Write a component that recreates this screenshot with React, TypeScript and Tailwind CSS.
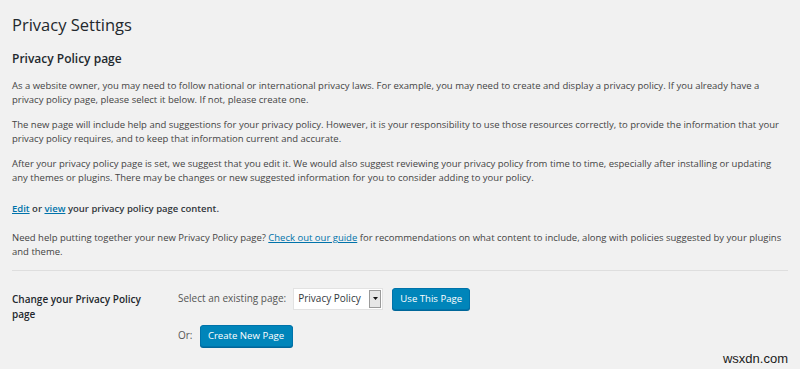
import React from "react";

export default function App() {
  return (
    <div
      className="relative w-[800px] h-[369px] overflow-hidden bg-[#f1f1f1] px-[12px] text-[#444]"
      style={{ fontFamily: '"Open Sans", "Noto Sans", sans-serif' }}
    >
      <h1 className="pt-[14px] text-[16.5px] leading-[22px] font-normal text-[#23282d]">
        Privacy Settings
      </h1>
      <h2 className="mt-[15px] text-[12px] leading-[16px] font-semibold text-[#23282d]">
        Privacy Policy page
      </h2>
      <div className="mt-[11.75px] text-[9.5px] leading-[14.5px]">
        <p>
          As a website owner, you may need to follow national or international privacy laws. For example, you may need to create and display a privacy policy. If you already have a privacy policy page, please select it below. If not, please create one.
        </p>
        <p className="mt-[10px]">
          The new page will include help and suggestions for your privacy policy. However, it is your responsibility to use those resources correctly, to provide the information that your privacy policy requires, and to keep that information current and accurate.
        </p>
        <p className="mt-[10px]">
          After your privacy policy page is set, we suggest that you edit it. We would also suggest reviewing your privacy policy from time to time, especially after installing or updating any themes or plugins. There may be changes or new suggested information for you to consider adding to your policy.
        </p>
        <p className="mt-[16px] font-semibold text-[#32373c]">
          <a className="text-[#0073aa] underline">Edit</a> or{" "}
          <a className="text-[#0073aa] underline">view</a> your privacy policy page content.
        </p>
        <p className="mt-[14.5px]">
          Need help putting together your new Privacy Policy page?{" "}
          <a className="text-[#0073aa] underline">Check out our guide</a> for recommendations on what content to include, along with policies suggested by your plugins and theme.
        </p>
      </div>
      <div className="mt-[10px] h-px bg-[#dedede]" />
      <div className="mt-[17px] grid grid-cols-[166px_1fr]">
        <div className="pt-[4.5px] pr-[20px] text-[10px] leading-[14.5px] font-semibold text-[#23282d]">
          Change your Privacy Policy page
        </div>
        <div className="flex flex-col gap-[15px] text-[10px]">
          <div className="flex items-center h-[22px]">
            <span className="text-[#555]">Select an existing page:</span>
            <div className="ml-[7px] flex items-stretch h-[22px] w-[90px] bg-white border border-[#e2e2e2]">
              <span className="flex-1 flex items-center pl-[4px] text-[#32373c]">Privacy Policy</span>
              <span className="my-[1px] mr-[1px] w-[12px] flex items-center justify-center bg-[#e6e6e6] border border-[#9a9a9a]">
                <svg width="5" height="3" viewBox="0 0 5 3">
                  <path d="M0 0 H5 L2.5 3 Z" fill="#111" />
                </svg>
              </span>
            </div>
            <button className="ml-[9px] h-[22px] w-[78px] rounded-[3px] bg-[#0085ba] border border-[#0073aa] text-white text-[9.6px] shadow-[0_1px_0_#006799]">
              Use This Page
            </button>
          </div>
          <div className="flex items-center h-[22px]">
            <span className="text-[#555]">Or:</span>
            <button className="ml-[7px] h-[22px] w-[93px] rounded-[3px] bg-[#0085ba] border border-[#0073aa] text-white text-[9.6px] shadow-[0_1px_0_#006799]">
              Create New Page
            </button>
          </div>
        </div>
      </div>
      <div
        className="absolute right-[12px] bottom-[1px] text-[13px] text-[#1a1a1a]"
        style={{ fontFamily: '"Liberation Sans", Arial, sans-serif' }}
      >
        wsxdn.com
      </div>
    </div>
  );
}
